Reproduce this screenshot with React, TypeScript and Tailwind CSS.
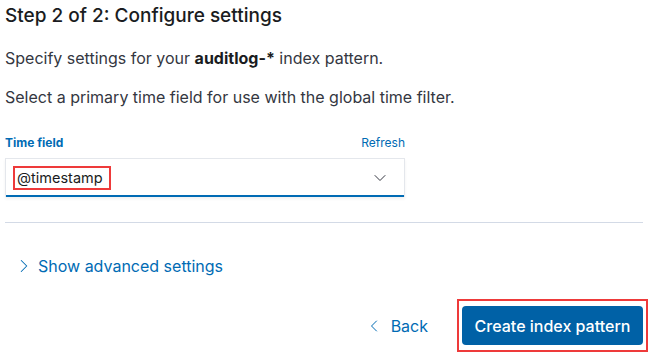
import { ChevronDown, ChevronRight, ChevronLeft } from 'lucide-react'

const App = () => {
  return (
    <div className="h-[355px] w-[653px] bg-white pl-[5px] pr-[10px] font-['Inter',sans-serif] text-[#343741]">
      <h2 className="pt-[4px] text-[19px] font-medium leading-[24px] text-[#1a1c21]">
        Step 2 of 2: Configure settings
      </h2>
      <p className="mt-[20px] text-[16px] leading-[20px]">
        Specify settings for your <strong className="font-bold text-[#1a1c21]">auditlog-*</strong> index pattern.
      </p>
      <p className="mt-[19px] text-[16px] leading-[20px]">
        Select a primary time field for use with the global time filter.
      </p>

      <div className="mt-[28px] w-[400px]">
        <div className="flex items-center justify-between text-[12px] leading-[16px]">
          <span className="font-bold text-[#006bb4]">Time field</span>
          <span className="text-[#006bb4]">Refresh</span>
        </div>
        <div className="mt-[7px] flex h-[39px] items-center justify-between border border-b-0 border-[#e4e7ec] bg-white pl-[7px] pr-[14px] [box-shadow:inset_0_-2px_0_#006bb4,0_2px_3px_rgba(0,0,0,0.06)]">
          <span className="inline-block border-2 border-[#ee3a3a] pl-[2px] pr-[6px] text-[14.5px] leading-[20px] text-[#1a1c21]">
            @timestamp
          </span>
          <ChevronDown className="h-[20px] w-[20px] text-[#343741]" strokeWidth={1.2} />
        </div>
      </div>

      <div className="mt-[25px] h-px w-[638px] bg-[#d3dae6]" />

      <div className="mt-[32px] flex items-center gap-[3px] pl-[8px] text-[16px] leading-[20px] text-[#006bb4]">
        <ChevronRight className="h-[22px] w-[22px]" strokeWidth={1.1} />
        <span>Show advanced settings</span>
      </div>

      <div className="mt-[22px] flex items-center justify-end">
        <div className="mr-[29px] flex items-center gap-[7px] text-[16px] leading-[20px] text-[#006bb4]">
          <ChevronLeft className="h-[20px] w-[20px]" strokeWidth={1.2} />
          <span>Back</span>
        </div>
        <div className="-mr-[5px] border-2 border-[#ee3a3a] px-[3px] py-[5px]">
          <button className="flex h-[39px] w-[181px] items-center justify-center rounded-[4px] bg-[#0061a6] text-[16px] font-medium text-white">
            Create index pattern
          </button>
        </div>
      </div>
    </div>
  )
}

export default App
